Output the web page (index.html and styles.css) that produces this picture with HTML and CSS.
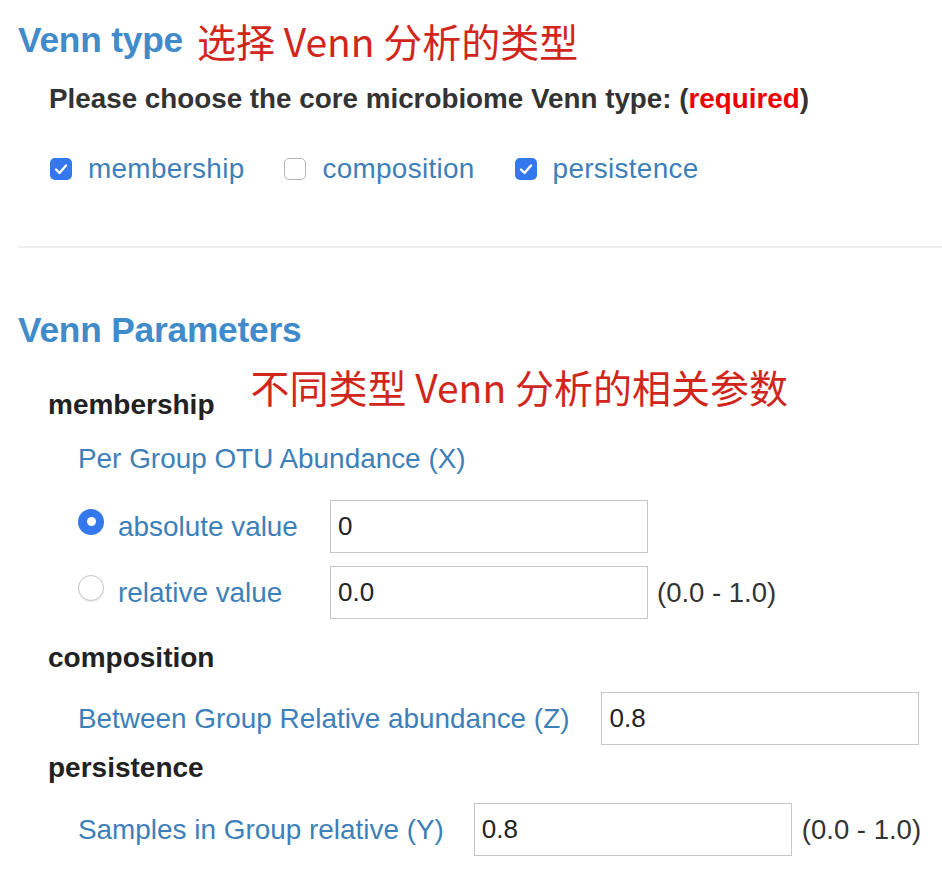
FILE: index.html
```html
<!DOCTYPE html>
<html lang="en">
<head>
<meta charset="utf-8">
<title>Venn</title>
<link rel="stylesheet" href="styles.css">
</head>
<body>
<div class="page">
  <section class="sec-type">
    <div class="heading-row">
      <h3 class="heading">Venn type</h3>
      <span class="note note-1">选择 Venn 分析的类型</span>
    </div>
    <p class="prompt">Please choose the core microbiome Venn type: (<span class="req">required</span>)</p>
    <div class="checks">
      <label class="check">
        <span class="box on"><svg viewBox="0 0 22 22" width="22" height="22"><path d="M6 11.5 L9.5 15 L16 7.5" fill="none" stroke="#fff" stroke-width="2.4" stroke-linecap="round" stroke-linejoin="round"/></svg></span>
        <span class="lbl">membership</span>
      </label>
      <label class="check">
        <span class="box off"></span>
        <span class="lbl">composition</span>
      </label>
      <label class="check">
        <span class="box on"><svg viewBox="0 0 22 22" width="22" height="22"><path d="M6 11.5 L9.5 15 L16 7.5" fill="none" stroke="#fff" stroke-width="2.4" stroke-linecap="round" stroke-linejoin="round"/></svg></span>
        <span class="lbl">persistence</span>
      </label>
    </div>
  </section>
  <hr class="divider">
  <section class="sec-params">
    <h3 class="heading heading-params">Venn Parameters</h3>
    <div class="sub-row">
      <h4 class="sub">membership</h4>
      <span class="note note-2">不同类型 Venn 分析的相关参数</span>
    </div>
    <div class="param-title lbl">Per Group OTU Abundance (X)</div>
    <div class="radio-row row-a">
      <span class="radio on"></span>
      <span class="lbl radio-lbl">absolute value</span>
      <span class="field">0</span>
    </div>
    <div class="radio-row row-b">
      <span class="radio off"></span>
      <span class="lbl radio-lbl">relative value</span>
      <span class="field">0.0</span>
      <span class="range">(0.0 - 1.0)</span>
    </div>
    <h4 class="sub sub-comp">composition</h4>
    <div class="param-row row-z">
      <span class="lbl">Between Group Relative abundance (Z)</span>
      <span class="field">0.8</span>
    </div>
    <h4 class="sub sub-pers">persistence</h4>
    <div class="param-row row-y">
      <span class="lbl">Samples in Group relative (Y)</span>
      <span class="field">0.8</span>
      <span class="range">(0.0 - 1.0)</span>
    </div>
  </section>
</div>
</body>
</html>
```

FILE: styles.css
```css
html, body {
  margin: 0;
  padding: 0;
  background: #fff;
}
body {
  font-family: "Liberation Sans", Arial, sans-serif;
  color: #333;
}
.page {
  padding-left: 18px;
}
.heading-row {
  display: flex;
  align-items: center;
  margin-top: 18px;
  height: 44px;
}
.heading {
  margin: 0;
  font-size: 35.3px;
  font-weight: bold;
  line-height: 44px;
  color: #428bca;
  letter-spacing: -0.2px;
}
.note {
  font-family: "Noto Sans CJK SC", "Liberation Sans", sans-serif;
  color: #d0261c;
  font-size: 39px;
  line-height: 44px;
  white-space: nowrap;
}
.note-1 {
  margin-left: 14px;
}
.prompt {
  margin: 19px 0 0 31px;
  font-size: 27.8px;
  font-weight: bold;
  line-height: 36px;
  color: #333;
}
.req {
  color: #e00;
}
.checks {
  display: flex;
  align-items: center;
  margin: 34px 0 0 32px;
  height: 36px;
  gap: 40px;
}
.check {
  display: flex;
  align-items: center;
  gap: 16px;
}
.box {
  display: block;
  width: 22px;
  height: 22px;
  border-radius: 5px;
  box-sizing: border-box;
}
.box svg {
  display: block;
}
.box.on {
  background: #3478f0;
}
.box.off {
  border: 1.5px solid #b4b4b4;
  background: #fff;
}
.lbl {
  font-size: 27.9px;
  line-height: 36px;
  color: #3d7fb9;
  white-space: nowrap;
}
.check .lbl {
  letter-spacing: 0.3px;
}
.divider {
  margin: 59px 0 0 0;
  border: 0;
  border-top: 2px solid #eeeeee;
  height: 0;
}
.heading-params {
  margin-top: 60px;
}
.sub-row {
  display: flex;
  align-items: flex-end;
  margin-top: 12px;
}
.sub {
  margin: 0;
  font-size: 28px;
  font-weight: bold;
  line-height: 36px;
  color: #222;
}
.sub-row .sub {
  margin-left: 30px;
}
.note-2 {
  margin-left: 36px;
  margin-bottom: 15px;
}
.param-title {
  margin: 18px 0 0 60px;
}
.radio-row {
  display: flex;
  align-items: center;
  margin-left: 60px;
  height: 53px;
}
.row-a {
  margin-top: 23px;
}
.row-b {
  margin-top: 13px;
}
.radio {
  display: block;
  width: 26px;
  height: 26px;
  border-radius: 50%;
  box-sizing: border-box;
  flex: none;
}
.radio.on {
  background: #3478f0;
  position: relative;
  top: -5px;
}
.radio.on::after {
  content: "";
  display: block;
  width: 9px;
  height: 9px;
  border-radius: 50%;
  background: #fff;
  margin: 8.5px;
}
.radio.off {
  border: 1.5px solid #c4c4c4;
  background: #fff;
  box-shadow: 0 1px 1px rgba(0,0,0,0.08);
  position: relative;
  top: -5px;
}
.radio-lbl {
  margin-left: 14px;
  width: 212px;
}
.field {
  display: flex;
  align-items: center;
  box-sizing: border-box;
  width: 318px;
  height: 53px;
  border: 1px solid #c6c6c6;
  padding-left: 7px;
  font-size: 26px;
  color: #222;
  background: #fff;
  flex: none;
}
.range {
  margin-left: 9px;
  font-size: 27.5px;
  line-height: 36px;
  color: #333;
  white-space: nowrap;
}
.sub-comp {
  margin: 21px 0 0 30px;
}
.param-row {
  display: flex;
  align-items: center;
  margin-left: 60px;
  height: 53px;
  gap: 32px;
}
.row-z {
  margin-top: 16px;
}
.sub-pers {
  margin: 5px 0 0 30px;
}
.row-y {
  margin-top: 17px;
  gap: 30px;
}
.row-y .range {
  margin-left: -20px;
}
```
